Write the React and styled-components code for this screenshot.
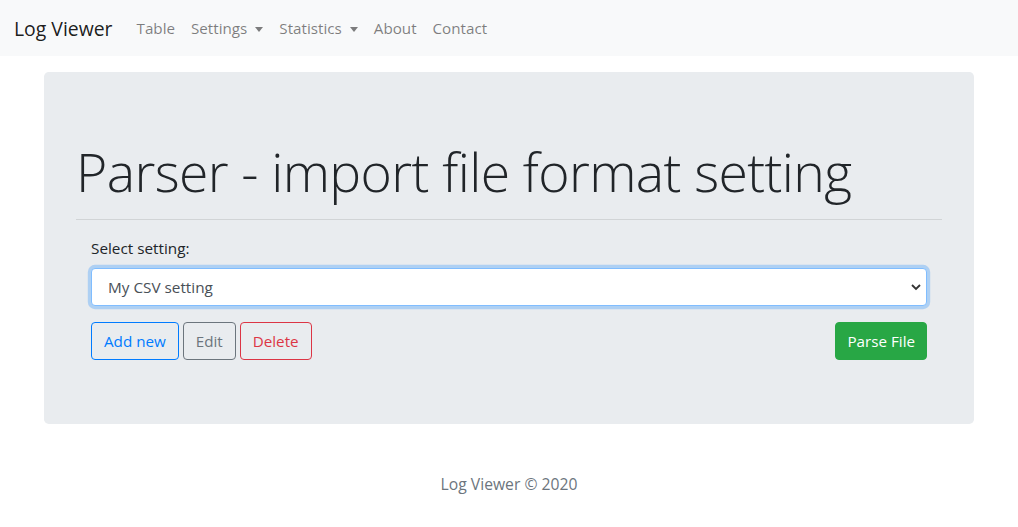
import React, { useState } from "react";
import styled, { createGlobalStyle } from "styled-components";

const GlobalStyle = createGlobalStyle`
  * { box-sizing: border-box; }
  body {
    margin: 0;
    font-family: "Open Sans", "Noto Sans", sans-serif;
    font-size: 16px;
    line-height: 1.5;
    color: #212529;
    background: #fff;
  }
`;

const Navbar = styled.nav`
  display: flex;
  align-items: center;
  height: 56px;
  padding: 1px 16px 0;
  background-color: #f8f9fa;
`;

const Brand = styled.a`
  font-size: 19.4px;
  color: rgba(0, 0, 0, 0.9);
  margin-right: 16px;
  margin-left: -2px;
  text-decoration: none;
`;

const NavList = styled.div`
  display: flex;
  align-items: center;
`;

const NavLink = styled.a`
  padding: 8px;
  font-size: 15.2px;
  color: rgba(0, 0, 0, 0.5);
  text-decoration: none;
  display: flex;
  align-items: center;
`;

const Caret = styled.span`
  display: inline-block;
  margin-left: 8px;
  border-top: 5px solid;
  border-right: 4.5px solid transparent;
  border-left: 4.5px solid transparent;
  transform: translateY(1px);
`;

const Container = styled.div`
  width: 960px;
  margin: 0 auto;
  padding: 0 15px;
`;

const Jumbotron = styled.div`
  margin-top: 16px;
  margin-bottom: 32px;
  padding: 64px 32px;
  background-color: #e9ecef;
  border-radius: 4.8px;
`;

const Display = styled.h1`
  margin: 0;
  font-size: 53.5px;
  font-weight: 300;
  line-height: 67px;
  letter-spacing: -0.6px;
  transform: translateY(2px);
`;

const Rule = styled.hr`
  margin: 16px 0;
  border: 0;
  border-top: 1px solid rgba(0, 0, 0, 0.1);
`;

const FormArea = styled.div`
  padding: 0 15px;
`;

const Label = styled.label`
  display: block;
  margin-bottom: 8px;
  font-size: 15.3px;
  line-height: 24px;
`;

const SelectWrap = styled.div`
  position: relative;
  margin-bottom: 16px;
`;

const Select = styled.select`
  display: block;
  width: 100%;
  height: 38px;
  padding: 0 32px 0 16px;
  font-family: inherit;
  font-size: 15.3px;
  color: #495057;
  background-color: #fff;
  border: 1px solid #80bdff;
  border-radius: 4px;
  box-shadow: 0 0 0 3.2px rgba(0, 123, 255, 0.25);
  appearance: none;
  outline: none;
`;

const Chevron = styled.svg`
  position: absolute;
  right: 6px;
  top: 15px;
  pointer-events: none;
`;

const ButtonRow = styled.div`
  display: flex;
  align-items: center;
  gap: 4px;
`;

const palette = {
  primary: "#007bff",
  secondary: "#6c757d",
  danger: "#dc3545",
  success: "#28a745",
};

const Button = styled.button`
  height: 38px;
  padding: 0 ${(p) => (p.solid ? "11px" : "12px")};
  font-family: inherit;
  font-size: 15.2px;
  border-radius: 4px;
  border: 1px solid ${(p) => palette[p.variant]};
  color: ${(p) => (p.solid ? "#fff" : palette[p.variant])};
  background: ${(p) => (p.solid ? palette[p.variant] : "transparent")};
  margin-left: ${(p) => (p.pushRight ? "auto" : "0")};
  cursor: pointer;
`;

const Footer = styled.footer`
  text-align: center;
  color: #6c757d;
  font-size: 15.7px;
  padding-top: 17px;
`;

export default function App() {
  const [setting, setSetting] = useState("csv");

  return (
    <>
      <GlobalStyle />
      <Navbar>
        <Brand href="#">Log Viewer</Brand>
        <NavList>
          <NavLink href="#">Table</NavLink>
          <NavLink href="#">
            Settings
            <Caret />
          </NavLink>
          <NavLink href="#">
            Statistics
            <Caret />
          </NavLink>
          <NavLink href="#">About</NavLink>
          <NavLink href="#">Contact</NavLink>
        </NavList>
      </Navbar>
      <Container>
        <Jumbotron>
          <Display>Parser - import file format setting</Display>
          <Rule />
          <FormArea>
            <Label htmlFor="setting">Select setting:</Label>
            <SelectWrap>
              <Select
                id="setting"
                value={setting}
                onChange={(e) => setSetting(e.target.value)}
              >
                <option value="csv">My CSV setting</option>
              </Select>
              <Chevron width="10" height="8" viewBox="0 0 10 8">
                <path
                  d="M1 2l4 4 4-4"
                  fill="none"
                  stroke="#333"
                  strokeWidth="1.8"
                />
              </Chevron>
            </SelectWrap>
            <ButtonRow>
              <Button variant="primary">Add new</Button>
              <Button variant="secondary">Edit</Button>
              <Button variant="danger">Delete</Button>
              <Button variant="success" solid pushRight>
                Parse File
              </Button>
            </ButtonRow>
          </FormArea>
        </Jumbotron>
        <Footer>Log Viewer © 2020</Footer>
      </Container>
    </>
  );
}
